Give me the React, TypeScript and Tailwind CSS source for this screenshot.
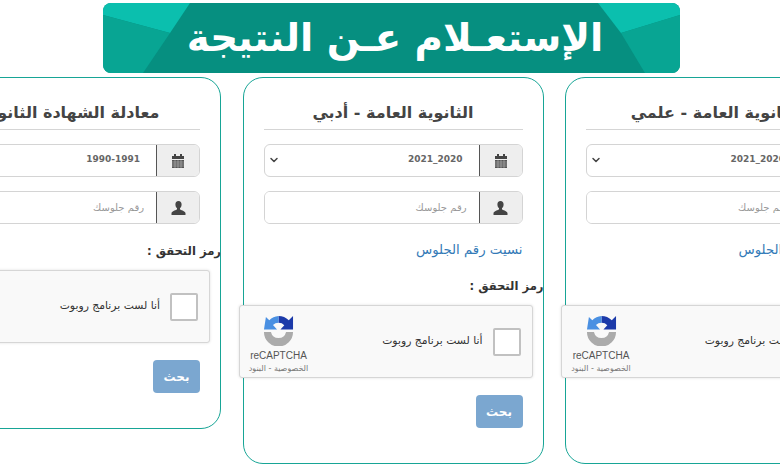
import React from 'react';
import { ChevronDown } from 'lucide-react';

const arabic = { fontFamily: '"DejaVu Sans", "Noto Sans", sans-serif' };

function CalendarIcon() {
  return (
    <svg width="14" height="14" viewBox="0 0 14 14" fill="#444">
      <rect x="3" y="0" width="2" height="3" />
      <rect x="9" y="0" width="2" height="3" />
      <path d="M1 2h12v3H1z" />
      <path d="M1 6h12v8H1z" fill="#555" />
      <path d="M1 8h12M1 10h12M1 12h12M4 6v8M7 6v8M10 6v8" stroke="#bbb" strokeWidth="0.6" />
    </svg>
  );
}

function UserIcon() {
  return (
    <svg width="15" height="14" viewBox="0 0 15 14" fill="#444">
      <path d="M7.5 0C5.5 0 4.4 1.500 4.4 3.400c0 1.500.6 3 1.600 3.800v1.200C4 9.300.8 10.200.5 12v2h14v-2c-.3-1.800-3.500-2.700-5.500-3.600V7.200c1-.8 1.600-2.300 1.600-3.800C10.600 1.500 9.500 0 7.500 0z" />
    </svg>
  );
}

function RecaptchaLogo() {
  return (
    <svg width="31" height="31" viewBox="0 0 32 32">
      <path d="M16 1A15 15 0 0 1 26.600 5.400L31 1V15H18L22 10.500A8 8 0 0 0 16 8z" fill="#1c3aa9" />
      <path d="M3 2L6.500 5.500A15 15 0 0 1 16 1V8A8 8 0 0 0 10.300 10.300L14.500 15H1z" fill="#4a90e2" />
      <path d="M1 17.500H8.200A8 8 0 0 0 23.800 17.500H31A15 15 0 0 1 1 17.500z" fill="#ababab" />
    </svg>
  );
}

function Recaptcha() {
  return (
    <div className="relative -mr-[10px] flex h-[73px] w-[294px] items-center justify-between rounded-[3px] border border-[#d6d6d6] bg-[#f9f9f9] pl-[8px] pr-[11px] shadow-[0_0_3px_rgba(0,0,0,0.12)]">
      <div className="flex items-center gap-[10px]">
        <div className="h-[28px] w-[28px] rounded-[2px] border-2 border-[#c1c1c1] bg-white" />
        <span className="text-[10.800px] text-[#333]">أنا لست برنامج روبوت</span>
      </div>
      <div className="flex w-[62px] flex-col items-center pt-[6px]">
        <RecaptchaLogo />
        <span className="mt-[4px] text-[10px] leading-[12px] text-[#555]" style={{ fontFamily: '"Liberation Sans", sans-serif' }}>reCAPTCHA</span>
        <span className="mt-[2px] whitespace-nowrap text-[8px] leading-[10px] text-[#777]">الخصوصية - البنود</span>
      </div>
    </div>
  );
}

type CardProps = {
  title: string;
  year: string;
  forgot?: boolean;
  className: string;
};

function ResultCard({ title, year, forgot, className }: CardProps) {
  return (
    <div dir="rtl" className={`w-[301px] shrink-0 rounded-[20px] border border-[#17a596] bg-white px-[20px] pt-[23px] ${className}`}>
      <h3 className="border-b border-[#d5d5d5] pb-[4px] text-center text-[16px] font-bold leading-[24px] whitespace-nowrap text-[#444]">{title}</h3>

      <div className="mt-[14px] flex h-[33px] overflow-hidden rounded-[6px] border border-[#d4d4d4]">
        <div className="flex w-[43px] shrink-0 items-center justify-center border-l border-l-[#555] bg-[#eee]">
          <CalendarIcon />
        </div>
        <div className="flex flex-1 items-center justify-between pl-[3px] pr-[16px] pb-[2px] text-[9px] font-bold text-[#666]">
          <span dir="ltr">{year}</span>
          <ChevronDown size={12} strokeWidth={3} color="#444" />
        </div>
      </div>

      <div className="mt-[14px] flex h-[33px] overflow-hidden rounded-[6px] border border-[#d4d4d4]">
        <div className="flex w-[43px] shrink-0 items-center justify-center border-l border-l-[#555] bg-[#eee]">
          <UserIcon />
        </div>
        <input placeholder="رقم جلوسك" className="min-w-0 flex-1 bg-white pr-[12px] text-[10px] outline-none placeholder:text-[#999]" style={arabic} />
      </div>

      {forgot && <p className="mt-[15px] text-[13.300px] leading-[22px] text-[#337ab7]">نسيت رقم الجلوس</p>}

      <p className={`-mr-[21px] text-[11.600px] font-bold leading-[20px] text-[#333] ${forgot ? 'mt-[15px]' : 'mt-[17px]'}`}>رمز التحقق :</p>

      <div className="mt-[9px]">
        <Recaptcha />
      </div>

      <button className="mt-[17px] h-[33px] w-[47px] rounded-[4px] bg-[#7ba7d0] text-[12px] font-bold text-white">بحث</button>
    </div>
  );
}

export default function App() {
  return (
    <div className="h-[470px] w-[780px] overflow-hidden bg-white pt-[3px]" style={arabic}>
      <div className="relative ml-[103px] flex h-[70px] w-[577px] items-center justify-center overflow-hidden rounded-[8px] bg-[#068f80] pl-[7px]">
        <svg className="absolute inset-0" width="577" height="70" viewBox="0 0 577 70">
          <path d="M0 0H87L67 30 0 12z" fill="#0bbfae" />
          <path d="M0 12 67 30 40 70H0z" fill="#08a593" />
          <path d="M495 0H577V12L518 30z" fill="#0bbfae" />
          <path d="M518 30 577 12V70H542z" fill="#08a593" />
        </svg>
        <h1 dir="rtl" className="relative whitespace-nowrap text-[38.700px] font-bold leading-none text-white">الإستعـلام عـن النتيجة</h1>
      </div>

      <div className="mt-[4px] -ml-[80px] flex w-[1000px] items-start gap-[21.5px]">
        <ResultCard title="معادلة الشهادة الثانوية" year="1990-1991" className="h-[352px]" />
        <ResultCard title="الثانوية العامة - أدبي" year="2021_2020" forgot className="h-[387px]" />
        <ResultCard title="الثانوية العامة - علمي" year="2021_2020" forgot className="h-[387px]" />
      </div>
    </div>
  );
}
